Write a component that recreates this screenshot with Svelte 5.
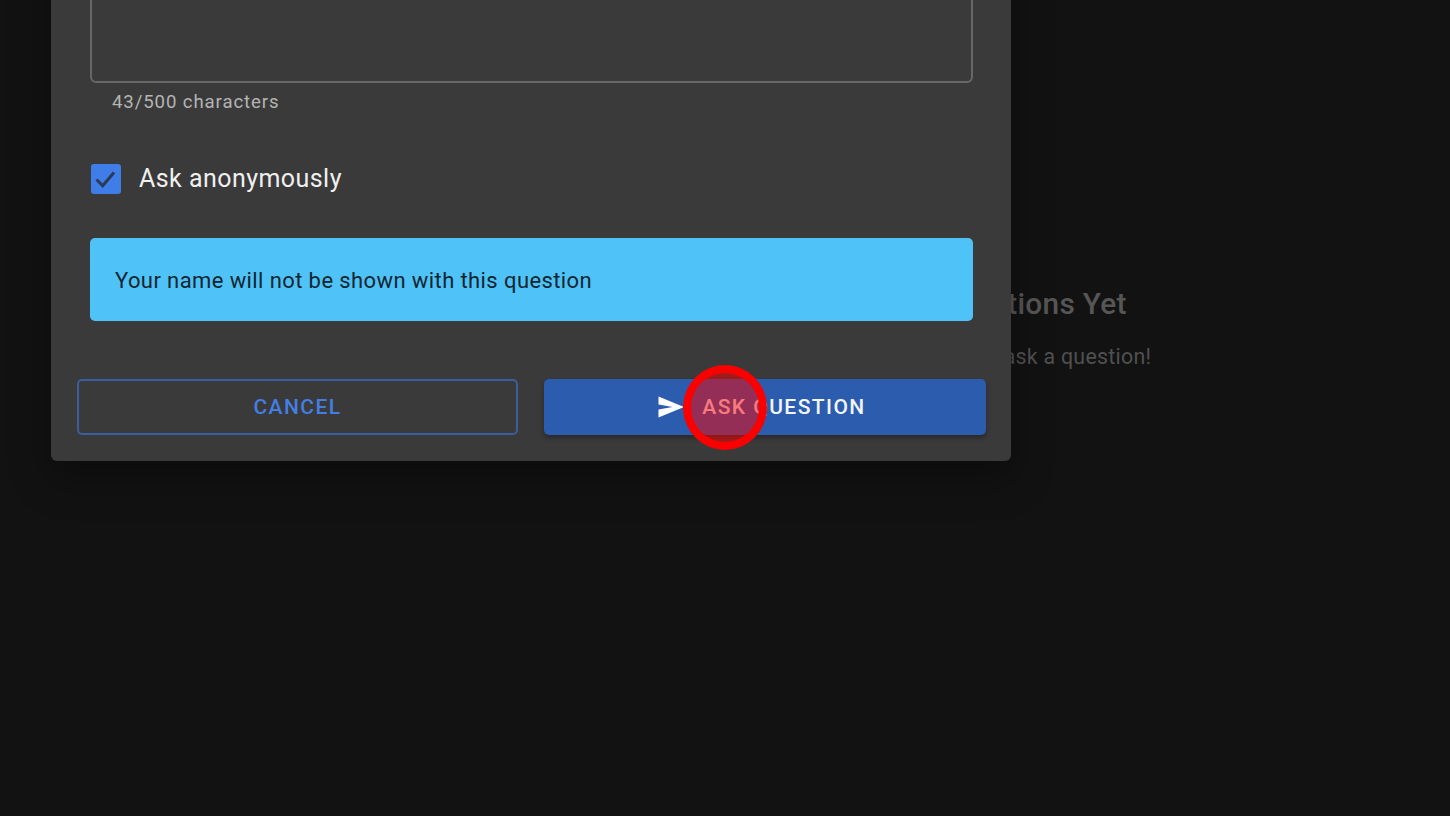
<script lang="ts">
  // Ask-a-question dialog scrolled past its top edge, over an empty question list.
  let anonymous = $state(true);
  let text = "";
  const max = 500;
  const used = 43;
</script>

<div class="page">
  <section class="empty">
    <h2>No Questions Yet</h2>
    <p>Be the first to ask a question!</p>
  </section>

  <div class="dialog" role="dialog" aria-label="Ask a question">
    <div class="content">
      <div class="field">
        <textarea class="input" aria-label="Question" value={text}></textarea>
        <span class="helper">{used}/{max} characters</span>
      </div>

      <label class="check">
        <input type="checkbox" bind:checked={anonymous} />
        <span class="box" aria-hidden="true">
          <svg viewBox="0 0 30 30" width="30" height="30">
            <path d="M5.5 15.5l6.2 6.2L23 8.5" fill="none" stroke="#2b3a55" stroke-width="3" />
          </svg>
        </span>
        <span class="check__label">Ask anonymously</span>
      </label>

      <div class="alert">Your name will not be shown with this question</div>
    </div>

    <div class="actions">
      <button class="btn btn--outlined" type="button">Cancel</button>
      <button class="btn btn--contained" type="button">
        <svg class="btn__icon" viewBox="0 0 26 24" width="26" height="24" aria-hidden="true">
          <path d="M0.5 1.5L26 12 0.5 22.5 0.5 14.6 14.5 12 0.5 9.4z" fill="#fff" />
        </svg>
        Ask question
      </button>
    </div>
  </div>

  <div class="marker" aria-hidden="true"></div>
</div>

<style>
  :global(body) {
    margin: 0;
    background: #121212;
  }
  .page {
    position: relative;
    height: 816px;
    overflow: hidden;
    background: #121212;
    font-family: Roboto, "Liberation Sans", sans-serif;
    display: flex;
    justify-content: center;
  }

  .empty {
    margin: 286px 0 0 568px;
    width: 300px;
    flex: none;
    text-align: center;
  }
  .empty h2 {
    margin: 0;
    font-size: 29.8px;
    line-height: 36px;
    font-weight: 500;
    letter-spacing: 0.3px;
    color: #565656;
  }
  .empty p {
    margin: 21px 0 0;
    font-size: 21.4px;
    line-height: 28px;
    letter-spacing: 0.25px;
    white-space: nowrap;
    color: #505050;
  }

  .dialog {
    position: absolute;
    left: 51px;
    bottom: 355px;
    width: 960px;
    box-sizing: border-box;
    background: #3a3a3a;
    border-radius: 0 0 6px 6px;
    box-shadow: 0 16px 40px rgba(0, 0, 0, 0.35);
  }
  .content {
    padding: 0 38px 0 39px;
  }
  .field {
    display: flex;
    flex-direction: column;
  }
  .input {
    display: block;
    box-sizing: border-box;
    width: 100%;
    height: 140px;
    margin: 0;
    background: transparent;
    border: 2px solid #676767;
    border-radius: 6px;
    resize: none;
    outline: none;
  }
  .helper {
    margin: 7px 0 0 22px;
    font-size: 18.6px;
    line-height: 24px;
    letter-spacing: 0.9px;
    color: #b4b4b4;
  }

  .check {
    display: flex;
    align-items: center;
    gap: 18px;
    margin: 47px 0 0 1px;
    height: 36px;
    position: relative;
  }
  .check input {
    position: absolute;
    opacity: 0;
    margin: 0;
    width: 30px;
    height: 30px;
  }
  .box {
    width: 30px;
    height: 30px;
    flex: none;
    border-radius: 3px;
    background: #3f7ee8;
  }
  .box svg {
    display: block;
  }
  .check__label {
    font-size: 25px;
    line-height: 36px;
    letter-spacing: 0.45px;
    color: #f0f0f0;
  }

  .alert {
    margin-top: 41px;
    height: 83px;
    box-sizing: border-box;
    display: flex;
    align-items: center;
    padding: 1px 25px 0;
    background: #4fc3f7;
    border-radius: 5px;
    font-size: 22px;
    letter-spacing: 0.4px;
    color: #0f2530;
  }

  .actions {
    display: grid;
    grid-template-columns: 441px 442px;
    gap: 26px;
    padding: 58px 25px 26px 26px;
  }
  .btn {
    display: flex;
    align-items: center;
    justify-content: center;
    gap: 18px;
    height: 56px;
    box-sizing: border-box;
    border-radius: 5px;
    font: 500 21px/1 Roboto, "Liberation Sans", sans-serif;
    letter-spacing: 1.45px;
    text-transform: uppercase;
    cursor: pointer;
  }
  .btn--outlined {
    background: transparent;
    border: 2px solid #3a5f9e;
    color: #437fe2;
  }
  .btn--contained {
    background: #2b5cad;
    border: 0;
    color: #f2f5fa;
    box-shadow: 0 3px 5px rgba(0, 0, 0, 0.3);
  }
  .btn__icon {
    flex: none;
    margin-left: -6px;
  }

  .marker {
    position: absolute;
    left: 683px;
    top: 365px;
    width: 84px;
    height: 85px;
    box-sizing: border-box;
    border: 8px solid #fa0000;
    border-radius: 50%;
    background: rgba(255, 0, 0, 0.5);
  }
</style>
